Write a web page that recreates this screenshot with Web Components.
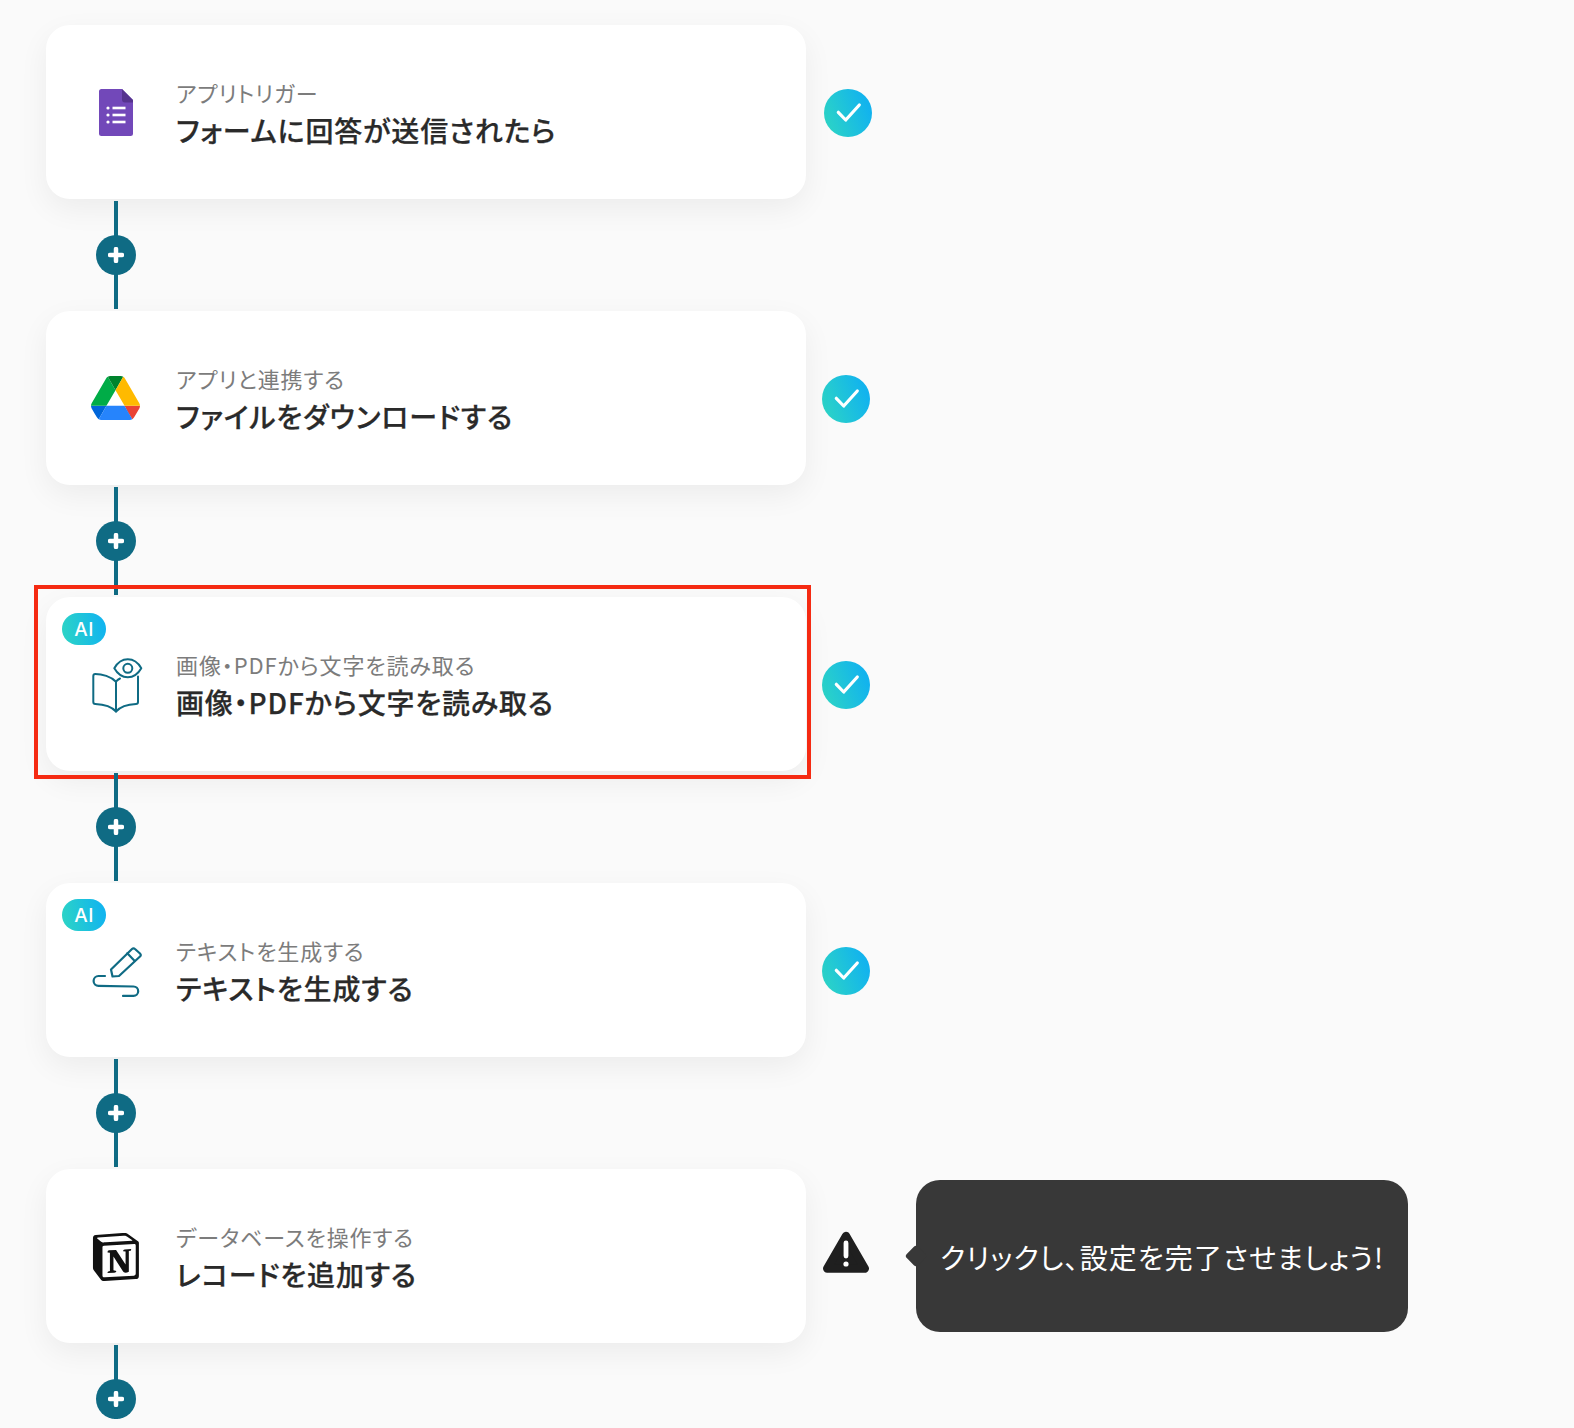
<!DOCTYPE html>
<html lang="ja">
<head>
<meta charset="utf-8">
<title>flow</title>
<style>
  html, body { margin: 0; background: #fafafa; }
  body {
    height: 1428px;
    overflow: hidden;
    font-family: "Noto Sans CJK JP", "Noto Sans", sans-serif;
  }
</style>
</head>
<body>
<flow-page>
  <flow-step label="アプリトリガー" heading="フォームに回答が送信されたら" status-gap="18">
    <svg slot="icon" width="48" height="48" viewBox="0 0 48 48">
      <path d="M9.500 1H30L41 12V45.500A2.500 2.500 0 0 1 38.500 48H9.500A2.500 2.500 0 0 1 7 45.500V3.500A2.500 2.500 0 0 1 9.500 1Z" fill="#7248b9"/>
      <path d="M30 1L41 12V14.500H33A3 3 0 0 1 30 11.500Z" fill="#56338f"/>
      <g fill="#fff">
        <circle cx="16" cy="20" r="1.600"/><circle cx="16" cy="27" r="1.600"/><circle cx="16" cy="34" r="1.600"/>
        <rect x="20.500" y="18.700" width="13" height="2.600"/><rect x="20.500" y="25.700" width="13" height="2.600"/><rect x="20.500" y="32.700" width="13" height="2.600"/>
      </g>
    </svg>
    <status-check slot="status"></status-check>
  </flow-step>
  <flow-connector></flow-connector>

  <flow-step label="アプリと連携する" heading="ファイルをダウンロードする">
    <svg slot="icon" width="49" height="44" viewBox="0 0 87.300 78" style="margin:2px 0 0 -1px;overflow:visible">
      <path d="m6.600 66.850 3.850 6.650c.8 1.400 1.950 2.500 3.300 3.300l13.750-23.800h-27.500c0 1.550.4 3.100 1.200 4.500z" fill="#0066da"/>
      <path d="m43.650 25-13.750-23.800c-1.350.8-2.500 1.900-3.300 3.300l-25.400 44a9.060 9.060 0 0 0 -1.200 4.500h27.500z" fill="#00ac47"/>
      <path d="m73.550 76.800c1.350-.8 2.500-1.900 3.300-3.300l1.600-2.750 7.650-13.250c.8-1.400 1.200-2.950 1.200-4.500h-27.502l5.852 11.500z" fill="#ea4335"/>
      <path d="m43.650 25 13.750-23.800c-1.350-.8-2.900-1.200-4.500-1.200h-18.500c-1.600 0-3.150.45-4.500 1.200z" fill="#00832d"/>
      <path d="m59.800 53h-32.300l-13.750 23.800c1.350.8 2.900 1.200 4.500 1.200h50.800c1.600 0 3.150-.45 4.500-1.200z" fill="#2684fc"/>
      <path d="m73.400 26.500-12.700-22c-.8-1.400-1.950-2.500-3.300-3.300l-13.750 23.800 16.150 28h27.450c0-1.550-.4-3.100-1.200-4.500z" fill="#ffba00"/>
    </svg>
    <status-check slot="status"></status-check>
  </flow-step>
  <flow-connector></flow-connector>

  <flow-step label="画像・PDFから文字を読み取る" heading="画像・PDFから文字を読み取る" ai highlight>
    <svg slot="icon" width="48" height="48" viewBox="0 0 48 48" fill="none" stroke="#0f6b84" stroke-width="2" stroke-linecap="round" stroke-linejoin="round" style="overflow:visible">
      <path d="M24 21.700C19 16.500 10 14 3.300 14Q1.300 14 1.300 16V42Q1.300 44 3.300 44C10 44.300 19 46 24 51.500V21.700"/>
      <path d="M24 21.700C25 20.500 26.500 19.300 28 18.500M46 16.500V42Q46 44 44 44C37 44.300 29 46 24 51.500"/>
      <path d="M22.300 8.300C25 3.500 30 -0.700 35.800 -0.700S46.600 3.500 49.300 8.300C46.600 13 41.600 17.300 35.800 17.300S25 13 22.300 8.300Z"/>
      <circle cx="35.800" cy="8.300" r="4.500"/>
    </svg>
    <status-check slot="status"></status-check>
  </flow-step>
  <flow-connector></flow-connector>

  <flow-step label="テキストを生成する" heading="テキストを生成する" ai>
    <svg slot="icon" width="48" height="48" viewBox="0 0 48 48" fill="none" stroke="#0f6b84" stroke-width="2.200" stroke-linecap="round" stroke-linejoin="round" style="overflow:visible">
      <path d="M20.500 30.500L19 23.500L40 3Q41.500 1.500 43 3L48 7.500Q49.500 9 48 10.500L27 30Z"/>
      <path d="M35.300 7.300L42.500 14.700"/>
      <path d="M13 30H6.500A4.900 4.900 0 0 0 6.500 39.800L41.500 40.500A4.700 4.700 0 0 1 41.500 49.900H31"/>
    </svg>
    <status-check slot="status"></status-check>
  </flow-step>
  <flow-connector></flow-connector>

  <flow-step label="データベースを操作する" heading="レコードを追加する">
    <svg slot="icon" width="48" height="48" viewBox="0 0 96 100" style="margin-top:1px;overflow:visible">
      <path d="M6.017 4.313l55.333 -4.087c6.797 -0.583 8.543 -0.19 12.817 2.917l17.663 12.443c2.913 2.14 3.883 2.723 3.883 5.053v68.243c0 4.277 -1.553 6.807 -6.99 7.193L24.467 99.967c-4.08 0.193 -6.023 -0.39 -8.16 -3.113L3.3 79.94c-2.333 -3.113 -3.3 -5.443 -3.3 -8.167V11.113c0 -3.497 1.553 -6.413 6.017 -6.8z" fill="#fff"/>
      <path fill-rule="evenodd" d="M61.35 0.227l-55.333 4.087C1.553 4.7 0 7.617 0 11.113v60.66c0 2.723 0.967 5.053 3.3 8.167l13.007 16.913c2.137 2.723 4.08 3.307 8.16 3.113l64.257 -3.89c5.433 -0.387 6.99 -2.917 6.99 -7.193V20.64c0 -2.21 -0.873 -2.847 -3.443 -4.733L74.167 3.143c-4.273 -3.107 -6.02 -3.5 -12.817 -2.917zM25.92 19.523c-5.247 0.353 -6.437 0.433 -9.417 -1.99L8.927 11.507c-0.77 -0.78 -0.383 -1.753 1.557 -1.947l53.193 -3.887c4.467 -0.39 6.793 1.167 8.54 2.527l9.123 6.61c0.39 0.197 1.36 1.36 0.193 1.36l-54.933 3.307 -0.68 0.047zM19.803 88.3V30.367c0 -2.53 0.777 -3.697 3.103 -3.893L86 22.78c2.14 -0.193 3.107 1.167 3.107 3.693v57.547c0 2.53 -0.39 4.67 -3.883 4.863l-60.377 3.5c-3.493 0.193 -5.043 -0.97 -5.043 -3.983zm59.6 -54.827c0.387 1.75 0 3.5 -1.75 3.7l-2.91 0.577v42.773c-2.527 1.36 -4.853 2.137 -6.797 2.137 -3.107 0 -3.883 -0.973 -6.21 -3.887l-19.03 -29.94v28.967l6.02 1.363s0 3.5 -4.857 3.5l-13.39 0.777c-0.39 -0.78 0 -2.723 1.357 -3.11l3.497 -0.97v-38.3L30.48 40.667c-0.39 -1.75 0.58 -4.277 3.3 -4.473l14.367 -0.967 19.8 30.327v-26.83l-5.047 -0.58c-0.39 -2.143 1.163 -3.7 3.103 -3.89l13.4 -0.78z" fill="#111"/>
    </svg>
    <status-warning slot="status"></status-warning>
    <flow-tooltip slot="status">クリックし、設定を完了させましょう!</flow-tooltip>
  </flow-step>
  <flow-connector last></flow-connector>
</flow-page>

<script>
/* ============================================================
   flow-page: column that holds the steps and connectors
   ============================================================ */
class FlowPage extends HTMLElement {
  constructor() {
    super();
    this.attachShadow({ mode: 'open' }).innerHTML = `
      <style>
        :host { display: flex; flex-direction: column; padding: 25px 0 0 46px; }
      </style>
      <slot></slot>`;
  }
}

/* ============================================================
   flow-step: white card + whatever sits to its right
   attrs: label, heading, ai, highlight, status-gap
   ============================================================ */
const stepTemplate = document.createElement('template');
stepTemplate.innerHTML = `
<style>
  :host { display: flex; align-items: center; height: 174px; }

  .card {
    position: relative;
    box-sizing: border-box;
    flex: none;
    width: 760px;
    height: 174px;
    display: flex;
    align-items: center;
    padding-left: 46px;
    gap: 36px;
    background: #fff;
    border-radius: 24px;
    box-shadow: 0 10px 30px rgba(0, 0, 0, .06);
  }

  .icon { flex: none; display: flex; align-items: flex-start; width: 48px; height: 48px; }

  .text { display: flex; flex-direction: column; gap: 2px; margin-top: 2px; font-feature-settings: "palt"; }
  .label { font-size: 22px; line-height: 32px; color: #7c7c7c; letter-spacing: .04em; }
  .heading {
    font-size: 28px;
    line-height: 40px;
    font-weight: 500;
    color: #2a2a2a;
    letter-spacing: .03em;
    -webkit-text-stroke: .25px #2a2a2a;
  }

  /* the AI pill, top left of the card */
  .ai {
    position: absolute;
    left: 16px;
    top: 16px;
    width: 44px;
    height: 32px;
    border-radius: 16px;
    display: none;
    align-items: center;
    justify-content: center;
    background: linear-gradient(80deg, #2dd5c4, #12b5ee 90%);
    color: #fff;
    font: 500 19px Inter, sans-serif;
    letter-spacing: .5px;
  }
  :host([ai]) .ai { display: flex; }

  /* the red annotation frame */
  .frame {
    position: absolute;
    display: none;
    left: -12px;
    top: -12px;
    right: -5px;
    bottom: -8px;
    border: 4px solid #f52a12;
    pointer-events: none;
  }
  :host([highlight]) .frame { display: block; }

  .side { display: flex; align-items: center; }
</style>
<div class="card">
  <div class="ai">AI</div>
  <div class="icon"><slot name="icon"></slot></div>
  <div class="text">
    <div class="label"></div>
    <div class="heading"></div>
  </div>
  <div class="frame"></div>
</div>
<div class="side"><slot name="status"></slot></div>
`;

class FlowStep extends HTMLElement {
  static observedAttributes = ['label', 'heading', 'status-gap'];

  constructor() {
    super();
    this.attachShadow({ mode: 'open' });
    this.shadowRoot.appendChild(stepTemplate.content.cloneNode(true));
  }

  connectedCallback() { this._render(); }
  attributeChangedCallback() { this._render(); }

  _render() {
    const root = this.shadowRoot;
    root.querySelector('.label').textContent = this.getAttribute('label') || '';
    root.querySelector('.heading').textContent = this.getAttribute('heading') || '';
    root.querySelector('.side').style.marginLeft = (this.getAttribute('status-gap') || 16) + 'px';
  }
}

/* ============================================================
   flow-connector: vertical line with the round plus on top
   ============================================================ */
class FlowConnector extends HTMLElement {
  constructor() {
    super();
    this.attachShadow({ mode: 'open' }).innerHTML = `
      <style>
        :host { display: block; position: relative; width: 40px; height: 112px; margin-left: 50px; z-index: 0; }
        .line { position: absolute; left: 18px; top: 2px; bottom: 2px; width: 4px; background: #0f6b84; }
        :host([last]) .line { bottom: 36px; }
        .plus {
          position: absolute; left: 0; top: 36px;
          width: 40px; height: 40px; border-radius: 50%;
          background: #0f6b84;
          display: flex; align-items: center; justify-content: center;
        }
      </style>
      <div class="line"></div>
      <div class="plus">
        <svg width="16" height="16" viewBox="0 0 16 16"><path d="M8 2V14M2 8H14" stroke="#fff" stroke-width="4.500" stroke-linecap="round"/></svg>
      </div>`;
  }
}

/* ============================================================
   status-check / status-warning: state of the step
   ============================================================ */
class StatusCheck extends HTMLElement {
  constructor() {
    super();
    this.attachShadow({ mode: 'open' }).innerHTML = `
      <style>
        :host { display: flex; width: 48px; height: 48px; margin-top: 2px; border-radius: 50%;
                background: linear-gradient(70deg, #2dd5c4 5%, #12b3ee 85%); }
      </style>
      <svg width="48" height="48" viewBox="0 0 48 48" fill="none">
        <path d="M14.300 23.300L21.700 31L35.300 16" stroke="#fff" stroke-width="3.200" stroke-linecap="round" stroke-linejoin="round"/>
      </svg>`;
  }
}

class StatusWarning extends HTMLElement {
  constructor() {
    super();
    this.attachShadow({ mode: 'open' }).innerHTML = `
      <style>
        :host { display: flex; width: 48px; height: 42px; margin-bottom: 8px; }
      </style>
      <svg width="48" height="42" viewBox="0 0 48 42">
        <path d="M24 5L42.800 37.500H5.200Z" fill="#1f1f1f" stroke="#1f1f1f" stroke-width="8.400" stroke-linejoin="round"/>
        <path d="M24 12V25" stroke="#fff" stroke-width="4.800" stroke-linecap="round"/>
        <circle cx="24" cy="33" r="2.600" fill="#fff"/>
      </svg>`;
  }
}

/* ============================================================
   flow-tooltip: dark bubble with a small arrow on its left
   ============================================================ */
class FlowTooltip extends HTMLElement {
  constructor() {
    super();
    this.attachShadow({ mode: 'open' }).innerHTML = `
      <style>
        :host {
          position: relative;
          display: flex;
          align-items: center;
          box-sizing: border-box;
          width: 492px;
          height: 152px;
          margin-left: 46px;
          padding: 1px 24px 0;
          border-radius: 24px;
          background: #383838;
          color: #fff;
          font-size: 28px;
          white-space: nowrap;
          font-feature-settings: "palt";
          letter-spacing: .04em;
        }
        :host::before {
          content: "";
          position: absolute;
          left: -8px;
          top: 50%;
          width: 16px;
          height: 16px;
          margin-top: -8px;
          background: #383838;
          border-radius: 3px;
          transform: rotate(45deg);
        }
      </style>
      <slot></slot>`;
  }
}

customElements.define('flow-page', FlowPage);
customElements.define('flow-step', FlowStep);
customElements.define('flow-connector', FlowConnector);
customElements.define('status-check', StatusCheck);
customElements.define('status-warning', StatusWarning);
customElements.define('flow-tooltip', FlowTooltip);
</script>
</body>
</html>
